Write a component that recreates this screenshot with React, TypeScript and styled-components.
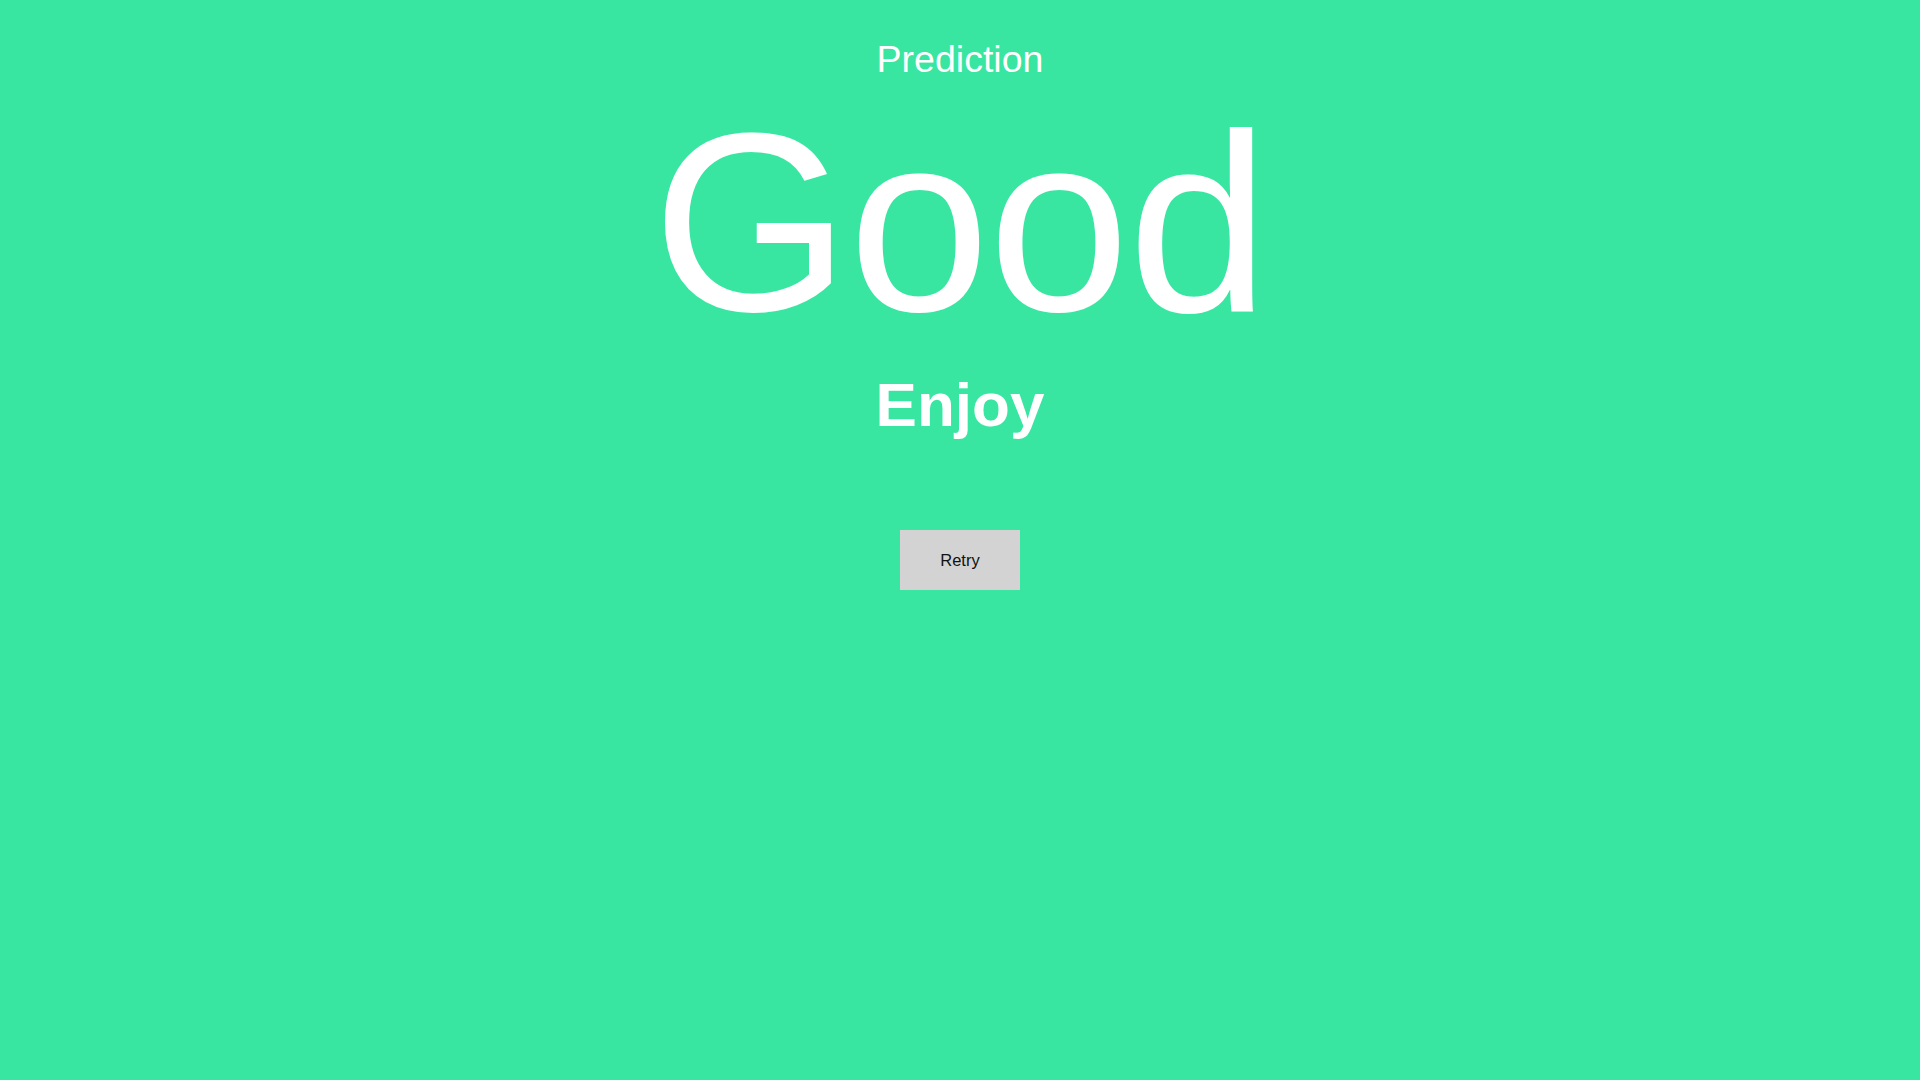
import React from "react";
import styled, { createGlobalStyle } from "styled-components";

const Global = createGlobalStyle`
  html, body { margin: 0; padding: 0; background: #38e6a2; }
  body { font-family: "Liberation Sans", Arial, sans-serif; }
`;

const Page = styled.main`
  min-height: 100vh;
  background: #38e6a2;
  display: flex;
  flex-direction: column;
  align-items: center;
  padding-top: 41px;
  box-sizing: border-box;
  color: #ffffff;
`;

const Label = styled.h2`
  margin: 0;
  font-size: 37.5px;
  line-height: 37px;
  font-weight: 400;
`;

const Result = styled.h1`
  margin: 18px 0 0;
  font-size: 254px;
  line-height: 254px;
  font-weight: 400;
  letter-spacing: -1.5px;
`;

const Advice = styled.h3`
  margin: 24px 0 0;
  font-size: 62px;
  line-height: 62px;
  font-weight: 700;
`;

const RetryButton = styled.button`
  margin-top: 94px;
  width: 120px;
  height: 60px;
  border: none;
  background: #d3d3d3;
  color: #111;
  font-family: "Liberation Sans", Arial, sans-serif;
  font-size: 16.5px;
  cursor: pointer;
`;

export default function App() {
  return (
    <>
      <Global />
      <Page>
        <Label>Prediction</Label>
        <Result>Good</Result>
        <Advice>Enjoy</Advice>
        <RetryButton>Retry</RetryButton>
      </Page>
    </>
  );
}
